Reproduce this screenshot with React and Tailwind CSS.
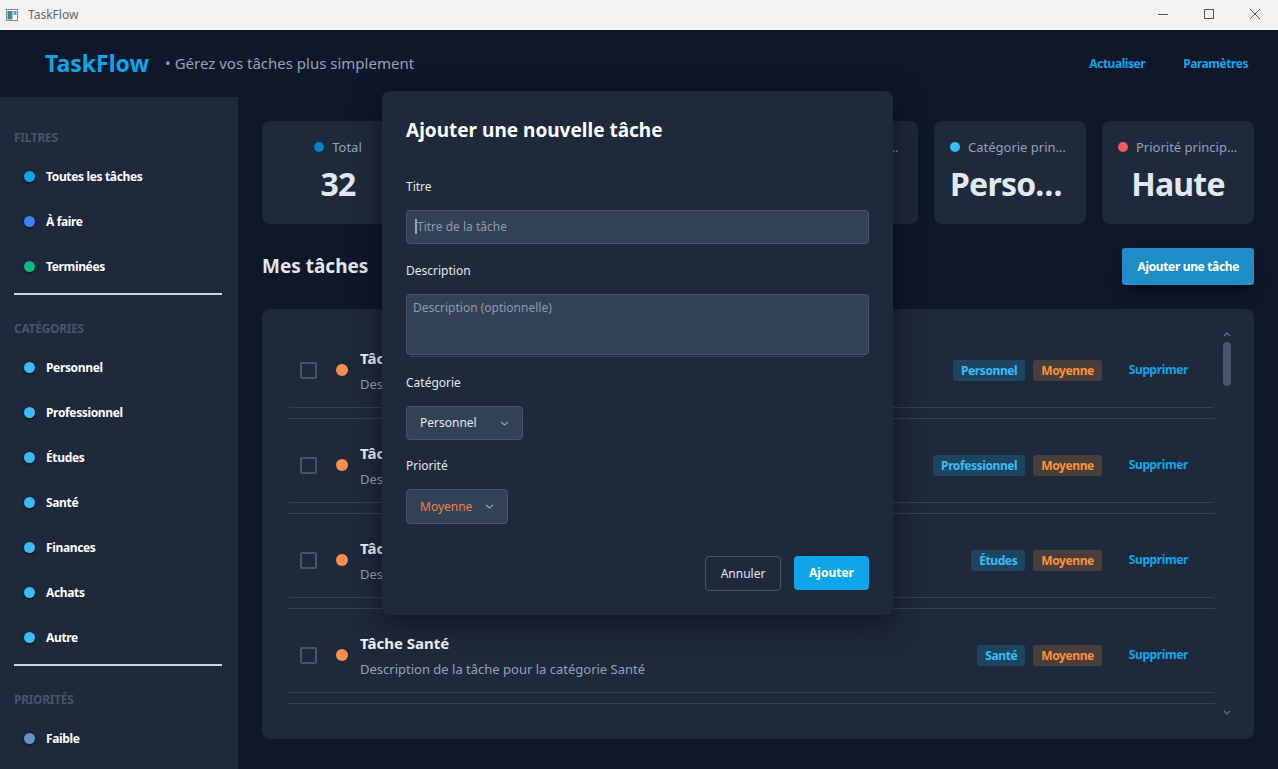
import React from "react";

const FILTERS = [
  { label: "Toutes les tâches", color: "bg-[#0ea5e9]" },
  { label: "À faire", color: "bg-[#3b82f6]" },
  { label: "Terminées", color: "bg-[#10b981]" },
];

const CATEGORIES = ["Personnel", "Professionnel", "Études", "Santé", "Finances", "Achats", "Autre"];

const STATS = [
  { label: "Total", value: "32", dot: "bg-[#0284c7]" },
  { label: "À faire", value: "32", dot: "bg-[#3b82f6]" },
  { label: "Terminées", value: "0", dot: "bg-[#10b981]" },
  { label: "Taux de complétion", value: "0%", dot: "bg-[#f59e0b]" },
  { label: "Catégorie principale", value: "Personnel", dot: "bg-[#38bdf8]" },
  { label: "Priorité principale", value: "Haute", dot: "bg-[#ef5b60]" },
];

const TASKS = ["Personnel", "Professionnel", "Études", "Santé"];

function SideItem({ label, color }) {
  return (
    <div className="flex h-[45px] items-center pl-[10px]">
      <span className={`h-[11px] w-[11px] rounded-full shadow-[0_1px_3px_rgba(0,0,0,0.6)] ${color}`} />
      <span className="ml-[11px] text-[12px] font-bold tracking-[-0.35px] text-white">{label}</span>
    </div>
  );
}

function SideHeader({ children, className = "" }) {
  return <div className={`text-[12px] font-bold uppercase leading-[16px] tracking-[-0.3px] text-[#475569] ${className}`}>{children}</div>;
}

function Chevron() {
  return (
    <svg width="9" height="5" viewBox="0 0 9 5">
      <path d="M1 1l3.5 3L8 1" fill="none" stroke="#94a3b8" strokeWidth="1.2" />
    </svg>
  );
}

function TaskRow({ cat, last }) {
  return (
    <div>
      <div className="flex h-[75px] items-center rounded-b-[3px] border-b border-[#334155] pr-[27px]">
        <span className="ml-[12px] h-[17px] w-[17px] rounded-[2px] border-2 border-[#475569]" />
        <span className="ml-[19px] h-[12px] w-[12px] rounded-full bg-[#fb8c4f]" />
        <div className="ml-[12px] flex flex-1 flex-col">
          <span className="text-[15px] font-bold leading-[20px] text-[#f1f5f9]">Tâche {cat}</span>
          <span className="mt-[7px] text-[13px] leading-[18px] text-[#94a3b8]">Description de la tâche pour la catégorie {cat}</span>
        </div>
        <span className="rounded-[3px] bg-[#1d4560] px-[8px] text-[12px] font-bold leading-[21px] tracking-[-0.4px] text-[#38bdf8]">{cat}</span>
        <span className="ml-[8px] rounded-[3px] bg-[#4a3e3b] px-[8px] text-[12px] font-bold leading-[21px] tracking-[-0.4px] text-[#fb923c]">Moyenne</span>
        <span className="ml-[27px] text-[12px] font-bold tracking-[-0.4px] text-[#0ea5e9]">Supprimer</span>
      </div>
      <div className="mt-[10px] h-px bg-[#334155]" />
      {!last && <div className="h-[9px]" />}
    </div>
  );
}

export default function App() {
  return (
    <div className="relative flex h-[769px] w-[1278px] flex-col overflow-hidden bg-[#0f172a] [font-family:'Noto_Sans',Lato,sans-serif]">
      {/* window title bar */}
      <div className="flex h-[30px] shrink-0 items-center bg-[#f3f3f3]">
        <svg width="12" height="12" viewBox="0 0 12 12" className="ml-[6px]">
          <rect x="0.5" y="0.5" width="11" height="11" fill="#fff" stroke="#8a8a8a" />
          <rect x="1.5" y="2" width="5" height="8.5" fill="#3a8f8a" />
          <rect x="7.5" y="2" width="3" height="4" fill="#5aa0d8" />
        </svg>
        <span className="ml-[10px] text-[12px] text-[#666]">TaskFlow</span>
        <div className="ml-auto flex items-center">
          <svg width="46" height="30" viewBox="0 0 46 30">
            <path d="M18 14.5h10" stroke="#555" strokeWidth="1" />
          </svg>
          <svg width="46" height="30" viewBox="0 0 46 30">
            <rect x="18.5" y="9.5" width="9" height="9" fill="none" stroke="#555" strokeWidth="1" />
          </svg>
          <svg width="46" height="30" viewBox="0 0 46 30">
            <path d="M18 9l10 10M28 9L18 19" stroke="#555" strokeWidth="1" />
          </svg>
        </div>
      </div>

      {/* app header */}
      <header className="flex h-[67px] shrink-0 items-center pl-[45px] pr-[30px]">
        <span className="text-[23px] font-bold text-[#0ea5e9]">TaskFlow</span>
        <span className="ml-[16px] text-[15px] text-[#94a3b8]">• Gérez vos tâches plus simplement</span>
        <div className="ml-auto flex items-center gap-[38px] text-[12px] font-bold tracking-[-0.45px] text-[#0ea5e9]">
          <span>Actualiser</span>
          <span>Paramètres</span>
        </div>
      </header>

      <div className="flex flex-1">
        {/* sidebar */}
        <aside className="w-[238px] shrink-0 bg-[#1e293b] px-[14px] pt-[33px]">
          <SideHeader>Filtres</SideHeader>
          <div className="mt-[8px]">
            {FILTERS.map((f) => (
              <SideItem key={f.label} {...f} />
            ))}
          </div>
          <div className="mt-[4px] h-[2px] w-[208px] bg-[#cbd5e1]" />
          <SideHeader className="mt-[26px]">Catégories</SideHeader>
          <div className="mt-[8px]">
            {CATEGORIES.map((c) => (
              <SideItem key={c} label={c} color="bg-[#38bdf8]" />
            ))}
          </div>
          <div className="mt-[4px] h-[2px] w-[208px] bg-[#cbd5e1]" />
          <SideHeader className="mt-[26px]">Priorités</SideHeader>
          <div className="mt-[8px]">
            <SideItem label="Faible" color="bg-[#6493c9]" />
          </div>
        </aside>

        {/* main */}
        <main className="flex-1 px-6 pt-6">
          <div className="grid grid-cols-6 gap-4">
            {STATS.map((s) => (
              <div key={s.label} className="flex h-[103px] min-w-0 flex-col items-center rounded-lg bg-[#1e293b] px-4 pt-[16px]">
                <div className="flex w-full min-w-0 items-center justify-center">
                  <span className={`h-[10px] w-[10px] shrink-0 rounded-full ${s.dot}`} />
                  <span className="ml-[8px] truncate text-[13px] leading-[20px] text-[#94a3b8]">{s.label}</span>
                </div>
                <div className="mt-[6px] w-full truncate text-center text-[32px] font-bold leading-[42px] tracking-[-0.8px] text-[#e2e8f0]">{s.value}</div>
              </div>
            ))}
          </div>

          <div className="mt-6 flex h-[37px] items-center justify-between">
            <h2 className="text-[19px] font-bold text-[#e2e8f0]">Mes tâches</h2>
            <button className="h-[37px] rounded-[3px] bg-[#1f8dc6] px-[15px] text-[12px] font-bold tracking-[-0.35px] text-white shadow-lg shadow-black/40">
              Ajouter une tâche
            </button>
          </div>

          <div className="mt-6 flex h-[430px] rounded-lg bg-[#1e293b] pl-[26px]">
            <div className="flex-1 overflow-hidden pt-[24px]">
              {TASKS.map((t, i) => (
                <TaskRow key={t} cat={t} last={i === TASKS.length - 1} />
              ))}
            </div>
            <div className="flex w-[39px] flex-col pl-[8px] pt-[23px] pb-[24px]">
              <svg width="8" height="5" viewBox="0 0 8 5">
                <path d="M1 4l3-3 3 3" fill="none" stroke="#64748b" strokeWidth="1.2" />
              </svg>
              <div className="mt-[5px] h-[44px] w-[8px] rounded-full bg-[#475569]" />
              <svg width="8" height="5" viewBox="0 0 8 5" className="mt-auto">
                <path d="M1 1l3 3 3-3" fill="none" stroke="#64748b" strokeWidth="1.2" />
              </svg>
            </div>
          </div>
        </main>
      </div>

      {/* add-task dialog */}
      <div className="absolute left-[382px] top-[91px] flex h-[524px] w-[511px] flex-col rounded-lg bg-[#1e293b] p-6 shadow-[0_8px_30px_rgba(0,0,0,0.5)]">
        <h3 className="text-[19px] font-bold leading-[30px] text-white">Ajouter une nouvelle tâche</h3>

        <label className="mt-[34px] text-[12px] leading-[16px] text-[#e2e8f0]">Titre</label>
        <div className="mt-[15px] flex h-[34px] items-center rounded-[4px] border border-[#475569] bg-[#334155] pl-[8px]">
          <span className="h-[15px] w-[2px] bg-[#9ca3af]" />
          <span className="text-[12px] text-[#8b9bb0]">Titre de la tâche</span>
        </div>

        <label className="mt-[19px] text-[12px] leading-[16px] text-[#e2e8f0]">Description</label>
        <div className="mt-[15px] h-[62px] rounded-[4px] border border-[#475569] bg-[#334155] px-[6px] pt-[4px] text-[12px] text-[#8b9bb0]">
          Description (optionnelle)
        </div>
        <div className="mx-[5px] mt-px h-px bg-[#3b4a5e]" />

        <label className="mt-[18px] text-[12px] leading-[16px] text-[#e2e8f0]">Catégorie</label>
        <div className="mt-[15px] flex h-[35px] w-[117px] items-center justify-between rounded-[4px] border border-[#475569] bg-[#334155] pl-[13px] pr-[13px]">
          <span className="text-[12px] text-[#e2e8f0]">Personnel</span>
          <Chevron />
        </div>

        <label className="mt-[18px] text-[12px] leading-[16px] text-[#e2e8f0]">Priorité</label>
        <div className="mt-[15px] flex h-[35px] w-[102px] items-center justify-between rounded-[4px] border border-[#475569] bg-[#334155] pl-[13px] pr-[13px]">
          <span className="text-[12px] text-[#f0804a]">Moyenne</span>
          <Chevron />
        </div>

        <div className="mt-[32px] flex justify-end gap-[13px]">
          <button className="h-[35px] w-[76px] rounded-[4px] border border-[#475569] text-[12px] text-[#e2e8f0]">Annuler</button>
          <button className="h-[34px] w-[75px] rounded-[4px] bg-[#0ea5e9] text-[12px] font-bold text-white">Ajouter</button>
        </div>
      </div>
    </div>
  );
}
